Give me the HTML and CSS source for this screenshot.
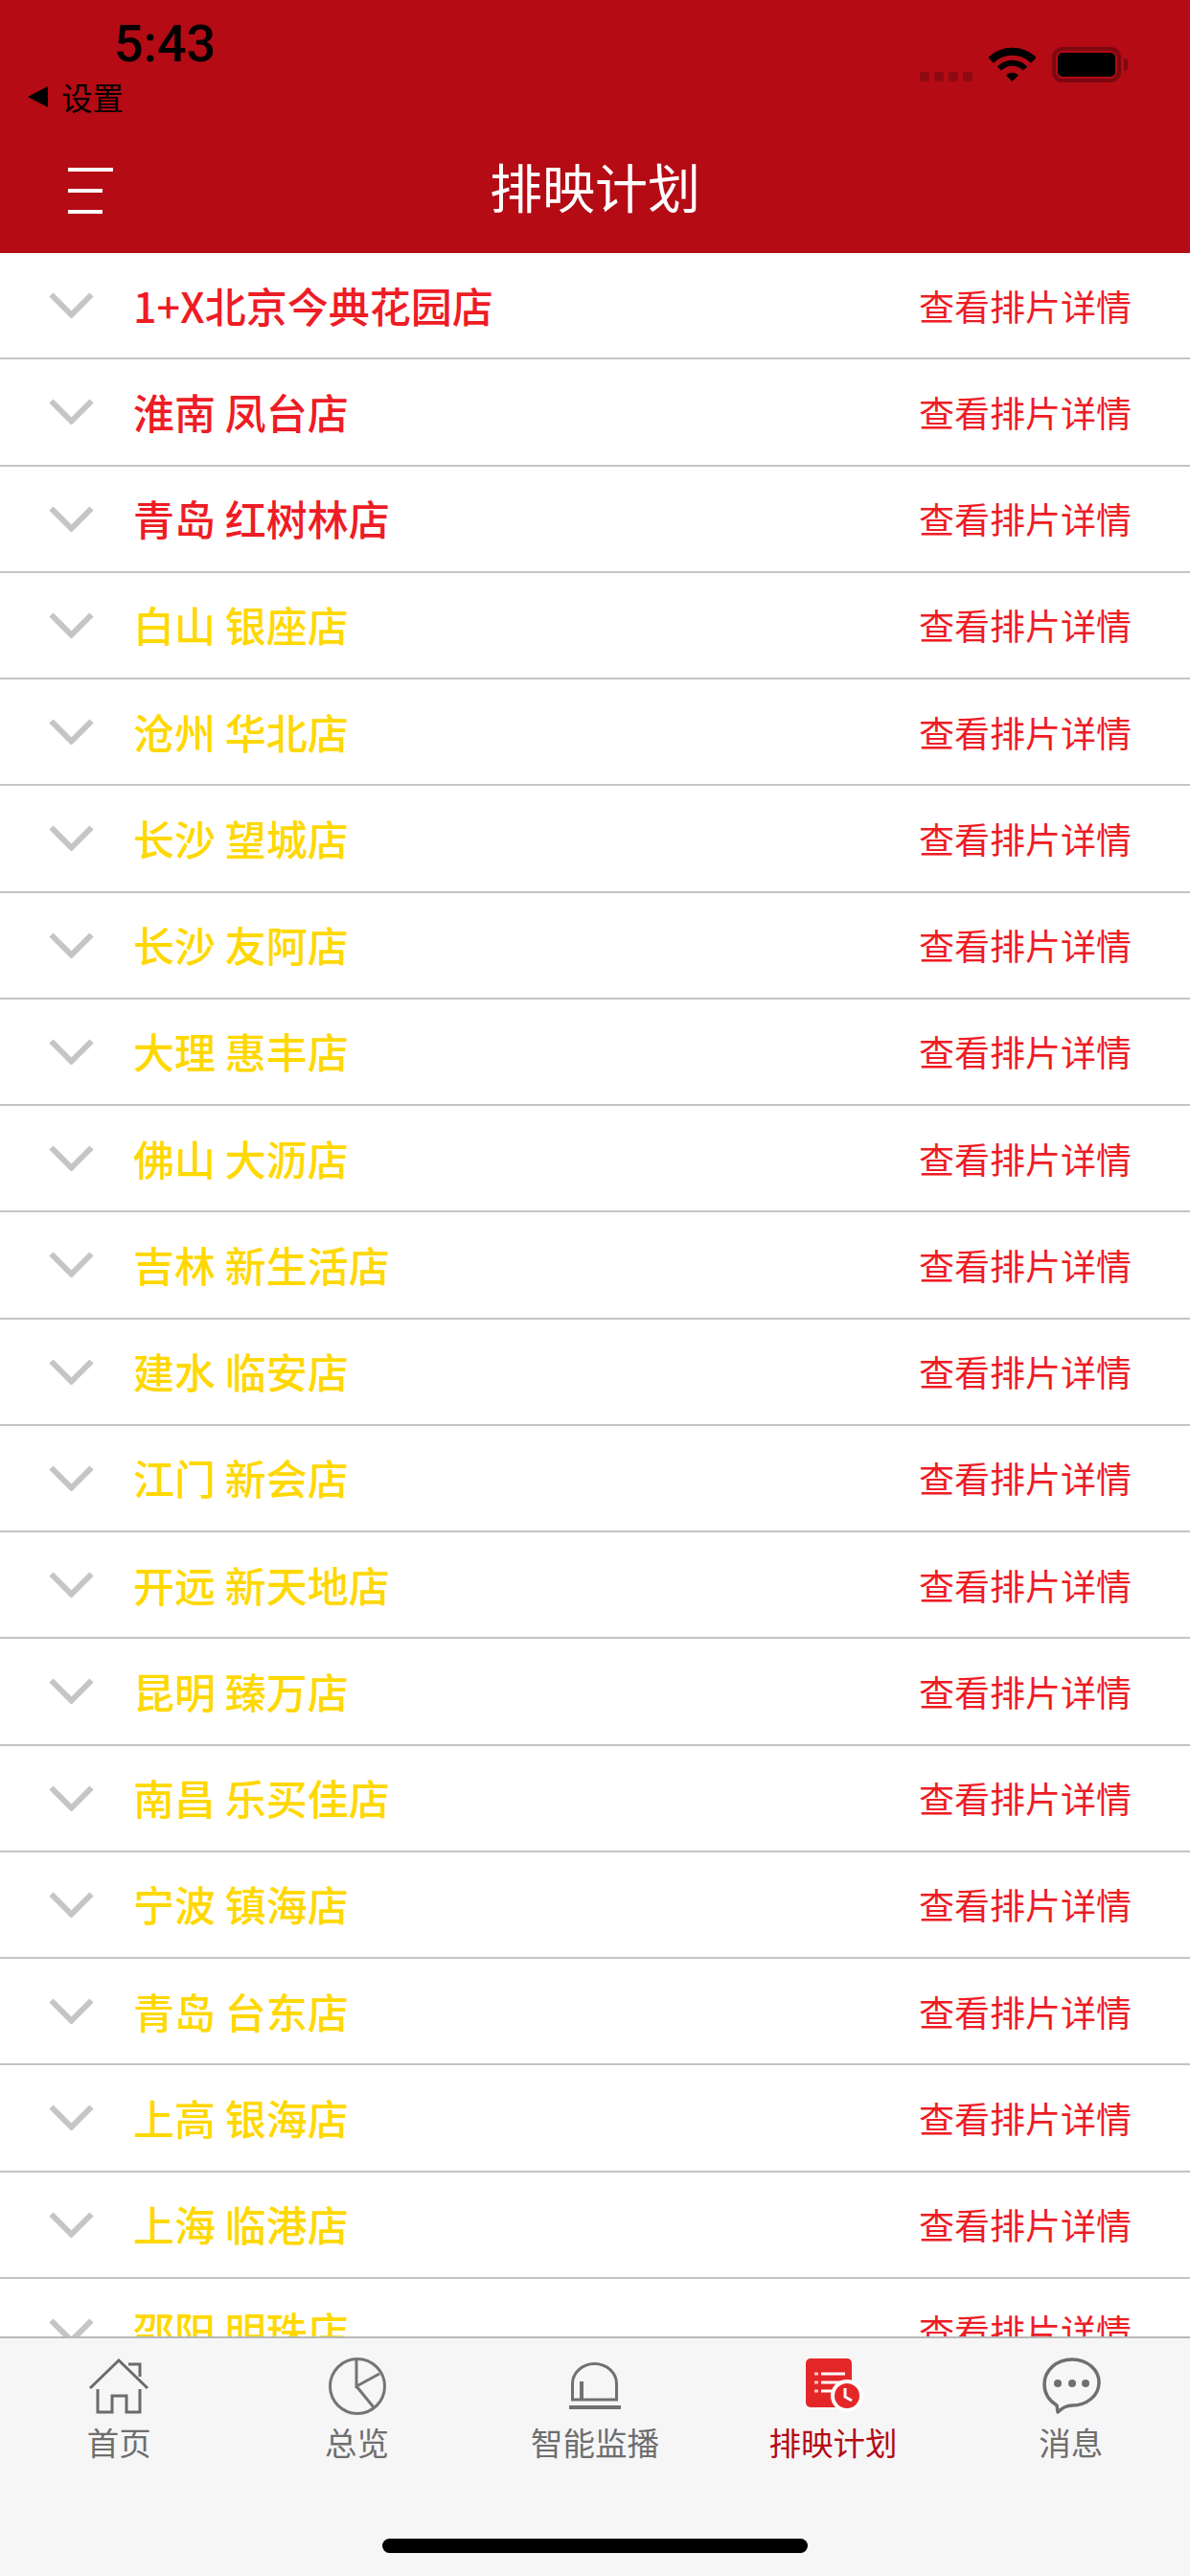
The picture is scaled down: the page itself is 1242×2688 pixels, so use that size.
FILE: index.html
```html
<!DOCTYPE html>
<html lang="zh-CN">
<head>
  <meta charset="UTF-8">
  <title>排映计划</title>
  <link rel="stylesheet" href="styles.css">
</head>
<body>
  <svg class="sprites" width="0" height="0">
    <symbol id="chevron" viewBox="0 0 47 27">
      <path d="M2.500 2.500L23.500 23.500L44.500 2.500" fill="none" stroke="#c5c5c5" stroke-width="6"/>
    </symbol>
  </svg>

  <div class="page">
    <header class="header">
      <div class="status-bar">
        <span class="time">5:43</span>
        <div class="status-icons">
          <div class="signal"><i></i><i></i><i></i><i></i></div>
          <svg class="wifi" width="49" height="36" viewBox="0 0 49 36">
            <path d="M2.100 13.900A32 32 0 0 1 46.900 13.900" fill="none" stroke="#000" stroke-width="8"/>
            <path d="M11 22.500A19 19 0 0 1 38 22.500" fill="none" stroke="#000" stroke-width="6"/>
            <path d="M24.500 36L18 29.500A9 9 0 0 1 31 29.500Z" fill="#000"/>
          </svg>
          <div class="battery"><div class="battery-fill"></div></div>
          <div class="battery-nub"></div>
        </div>
      </div>
      <div class="back-link"><span class="back-arrow"></span>设置</div>
      <div class="nav-bar">
        <div class="menu-icon"><i class="long"></i><i></i><i></i></div>
        <h1>排映计划</h1>
      </div>
    </header>

    <ul class="store-list">
      <li class="store alert"><svg class="chevron"><use href="#chevron"/></svg><span class="store-name">1+X北京今典花园店</span><a class="store-link">查看排片详情</a></li>
      <li class="store alert"><svg class="chevron"><use href="#chevron"/></svg><span class="store-name">淮南 凤台店</span><a class="store-link">查看排片详情</a></li>
      <li class="store alert"><svg class="chevron"><use href="#chevron"/></svg><span class="store-name">青岛 红树林店</span><a class="store-link">查看排片详情</a></li>
      <li class="store"><svg class="chevron"><use href="#chevron"/></svg><span class="store-name">白山 银座店</span><a class="store-link">查看排片详情</a></li>
      <li class="store"><svg class="chevron"><use href="#chevron"/></svg><span class="store-name">沧州 华北店</span><a class="store-link">查看排片详情</a></li>
      <li class="store"><svg class="chevron"><use href="#chevron"/></svg><span class="store-name">长沙 望城店</span><a class="store-link">查看排片详情</a></li>
      <li class="store"><svg class="chevron"><use href="#chevron"/></svg><span class="store-name">长沙 友阿店</span><a class="store-link">查看排片详情</a></li>
      <li class="store"><svg class="chevron"><use href="#chevron"/></svg><span class="store-name">大理 惠丰店</span><a class="store-link">查看排片详情</a></li>
      <li class="store"><svg class="chevron"><use href="#chevron"/></svg><span class="store-name">佛山 大沥店</span><a class="store-link">查看排片详情</a></li>
      <li class="store"><svg class="chevron"><use href="#chevron"/></svg><span class="store-name">吉林 新生活店</span><a class="store-link">查看排片详情</a></li>
      <li class="store"><svg class="chevron"><use href="#chevron"/></svg><span class="store-name">建水 临安店</span><a class="store-link">查看排片详情</a></li>
      <li class="store"><svg class="chevron"><use href="#chevron"/></svg><span class="store-name">江门 新会店</span><a class="store-link">查看排片详情</a></li>
      <li class="store"><svg class="chevron"><use href="#chevron"/></svg><span class="store-name">开远 新天地店</span><a class="store-link">查看排片详情</a></li>
      <li class="store"><svg class="chevron"><use href="#chevron"/></svg><span class="store-name">昆明 臻万店</span><a class="store-link">查看排片详情</a></li>
      <li class="store"><svg class="chevron"><use href="#chevron"/></svg><span class="store-name">南昌 乐买佳店</span><a class="store-link">查看排片详情</a></li>
      <li class="store"><svg class="chevron"><use href="#chevron"/></svg><span class="store-name">宁波 镇海店</span><a class="store-link">查看排片详情</a></li>
      <li class="store"><svg class="chevron"><use href="#chevron"/></svg><span class="store-name">青岛 台东店</span><a class="store-link">查看排片详情</a></li>
      <li class="store"><svg class="chevron"><use href="#chevron"/></svg><span class="store-name">上高 银海店</span><a class="store-link">查看排片详情</a></li>
      <li class="store"><svg class="chevron"><use href="#chevron"/></svg><span class="store-name">上海 临港店</span><a class="store-link">查看排片详情</a></li>
      <li class="store"><svg class="chevron"><use href="#chevron"/></svg><span class="store-name">邵阳 明珠店</span><a class="store-link">查看排片详情</a></li>
    </ul>

    <footer class="tab-bar">
      <nav class="tabs">
        <div class="tab">
          <svg class="tab-icon" width="64" height="60" viewBox="0 0 64 60" fill="none" stroke="#6b6b6b" stroke-width="3">
            <path d="M2 32L32 3L62 32"/>
            <path d="M42 7H54V20"/>
            <path d="M10 33V57H25V40H40V57H54V33"/>
          </svg>
          <span>首页</span>
        </div>
        <div class="tab">
          <svg class="tab-icon" width="64" height="60" viewBox="0 0 64 60" fill="none" stroke="#757575" stroke-width="3">
            <circle cx="32" cy="30" r="28.500"/>
            <path d="M31 2V30L55 17M31 30L49 52"/>
          </svg>
          <span>总览</span>
        </div>
        <div class="tab">
          <svg class="tab-icon" width="64" height="60" viewBox="0 0 64 60" fill="none" stroke="#707070">
            <path d="M8.500 44V27.500A23 21 0 0 1 54.500 27.500V44Z" stroke-width="3"/>
            <path d="M18 25V44" stroke-width="4"/>
            <path d="M5 52H59" stroke-width="4"/>
          </svg>
          <span>智能监播</span>
        </div>
        <div class="tab active">
          <svg class="tab-icon" width="64" height="60" viewBox="0 0 64 60">
            <rect x="4" y="1" width="48" height="51" rx="5" fill="#e32728"/>
            <path d="M13 17H17M13 26H17M13 35H17" stroke="#f7c4c4" stroke-width="3"/>
            <path d="M20 17H45M20 26H41M20 35H35" stroke="#fff" stroke-width="3"/>
            <circle cx="47" cy="40" r="17" fill="#fff"/>
            <circle cx="47" cy="40" r="13" fill="#e32728"/>
            <path d="M45 32V41L52 45" fill="none" stroke="#fff" stroke-width="3"/>
          </svg>
          <span>排映计划</span>
        </div>
        <div class="tab">
          <svg class="tab-icon" width="64" height="60" viewBox="0 0 64 60">
            <path d="M17 50C9 45 4 37 4 28C4 13 17 2 33 2C49 2 61 13 61 26C61 40 48 50 33 50C29 50 24 51 18 57Z" fill="none" stroke="#6f6f6f" stroke-width="3.500" stroke-linejoin="round"/>
            <circle cx="18" cy="27" r="4" fill="#6f6f6f"/>
            <circle cx="33" cy="27" r="4" fill="#6f6f6f"/>
            <circle cx="47" cy="27" r="4" fill="#6f6f6f"/>
          </svg>
          <span>消息</span>
        </div>
      </nav>
      <div class="home-indicator"></div>
    </footer>
  </div>
</body>
</html>
```

FILE: styles.css
```css
* {
  box-sizing: border-box;
}

body {
  margin: 0;
  font-family: "Noto Sans CJK SC", "Liberation Sans", sans-serif;
}

.sprites {
  position: absolute;
}

.page {
  width: 1242px;
  height: 2688px;
  display: flex;
  flex-direction: column;
  overflow: hidden;
  background-color: #fff;
}

/* header */
.header {
  height: 264px;
  flex-shrink: 0;
  background-color: #b40b15;
  color: #fff;
}

.status-bar {
  height: 81px;
  padding: 19px 65px 0 119px;
  display: flex;
  justify-content: space-between;
}

.time {
  font-family: Roboto, "Liberation Sans", sans-serif;
  font-size: 54px;
  font-weight: 500;
  line-height: 54px;
  color: #000;
}

.status-icons {
  display: flex;
  align-items: flex-end;
  height: 37px;
  margin-top: 30px;
}

.signal {
  display: flex;
  gap: 5px;
  margin-right: 17px;
  margin-bottom: 1px;
}

.signal i {
  width: 10px;
  height: 10px;
  border-radius: 3px;
  background-color: #8e0a12;
}

.wifi {
  margin-right: 17px;
  margin-bottom: 1px;
}

.battery {
  width: 72px;
  height: 37px;
  padding: 2px;
  border: 4px solid #7d0810;
  border-radius: 11px;
}

.battery-fill {
  height: 100%;
  background-color: #000;
  border-radius: 5px;
}

.battery-nub {
  width: 4px;
  height: 13px;
  margin: 0 0 12px 3px;
  background-color: #7d0810;
  border-radius: 0 7px 7px 0;
}

.back-link {
  height: 40px;
  padding-left: 29px;
  display: flex;
  align-items: center;
  font-size: 32.500px;
  line-height: 40px;
  color: #000;
}

.back-arrow {
  width: 0;
  height: 0;
  margin-right: 14px;
  border-style: solid;
  border-width: 11px 21px 11px 0;
  border-color: transparent #000 transparent transparent;
}

.nav-bar {
  position: relative;
  height: 143px;
  padding-top: 37px;
}

.nav-bar h1 {
  margin: 0;
  font-size: 55px;
  font-weight: 400;
  line-height: 70px;
  text-align: center;
}

.menu-icon {
  position: absolute;
  left: 71px;
  top: 54px;
  display: flex;
  flex-direction: column;
  gap: 18px;
}

.menu-icon i {
  display: block;
  width: 36px;
  height: 4px;
  background-color: #fff;
}

.menu-icon i.long {
  width: 47px;
}

/* store list */
.store-list {
  flex: 1;
  min-height: 0;
  margin: 0;
  padding: 0;
  list-style: none;
  overflow: hidden;
}

.store {
  height: 111.25px;
  padding: 0 61px 0 51px;
  display: flex;
  align-items: center;
  border-bottom: 2px solid #c4c4c4;
}

.chevron {
  width: 47px;
  height: 27px;
  flex-shrink: 0;
  margin-right: 41px;
}

.store-name {
  font-size: 43px;
  font-weight: 500;
  line-height: 60px;
  margin-top: -2px;
  color: #ffd800;
}

.store.alert .store-name {
  color: #ee1c25;
}

.store-link {
  margin-left: auto;
  font-size: 37px;
  color: #ee1c25;
}

/* bottom tabs */
.tab-bar {
  height: 250px;
  flex-shrink: 0;
  display: flex;
  flex-direction: column;
  background-color: #f6f6f7;
  border-top: 2px solid #b8b8b8;
}

.tabs {
  display: grid;
  grid-template-columns: repeat(5, 1fr);
  padding-top: 20px;
}

.tab {
  display: flex;
  flex-direction: column;
  align-items: center;
  font-size: 33.500px;
  line-height: 44px;
  color: #6e6e6e;
}

.tab span {
  margin-top: 6px;
}

.tab.active {
  color: #b40b15;
}

.home-indicator {
  width: 444px;
  height: 15px;
  margin: auto auto 24px;
  background-color: #000;
  border-radius: 8px;
}
```
